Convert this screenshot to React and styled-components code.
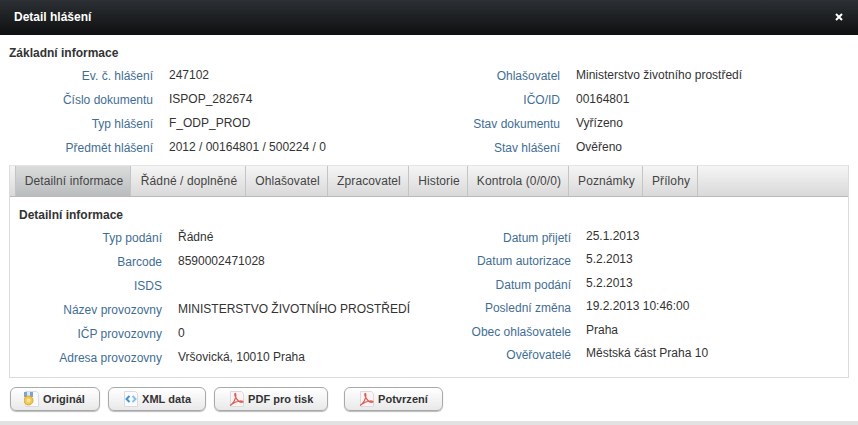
import React from "react";
import styled, { createGlobalStyle } from "styled-components";

const GlobalStyle = createGlobalStyle`
  html, body {
    margin: 0;
    padding: 0;
    background: #fff;
  }
  body {
    font-family: "Liberation Sans", Arial, sans-serif;
    font-size: 12px;
    color: #333;
  }
`;

const Dialog = styled.div`
  width: 858px;
  height: 425px;
  overflow: hidden;
  display: flex;
  flex-direction: column;
  background: #fff;
`;

const Header = styled.div`
  height: 35px;
  flex: none;
  display: flex;
  align-items: center;
  justify-content: space-between;
  padding: 0 15px 1px 14px;
  box-sizing: border-box;
  background: linear-gradient(#2c3034, #0e0f10);
  color: #fff;
  font-weight: bold;
  font-size: 12px;
`;

const Close = styled.svg`
  width: 8px;
  height: 8px;
`;

const Body = styled.div`
  flex: 1;
  padding: 11px 9px 0 9px;
  display: flex;
  flex-direction: column;
`;

const Heading = styled.div`
  font-weight: bold;
  font-size: 12px;
  line-height: 14px;
  color: #333;
`;

const Columns = styled.div`
  display: grid;
  grid-template-columns: ${(p) => p.$left}px 1fr;
  margin-top: ${(p) => p.$top}px;
`;

const Column = styled.div`
  display: flex;
  flex-direction: column;
`;

const Row = styled.div`
  display: flex;
  height: ${(p) => p.$height}px;
  line-height: 16px;
`;

const Label = styled.div`
  width: ${(p) => p.$width}px;
  flex: none;
  padding-top: 1px;
  text-align: right;
  color: #3f6e95;
`;

const Value = styled.div`
  margin-left: ${(p) => p.$gap}px;
  margin-top: ${(p) => (p.$lift ? "-1px" : "0")};
  color: #333;
  white-space: nowrap;
`;

const TabPanel = styled.div`
  margin-top: 2px;
  height: 213px;
  border: 1px solid #dcdcdc;
  border-top-color: #e4e4e4;
  box-sizing: border-box;
`;

const TabBar = styled.div`
  height: 31px;
  box-sizing: border-box;
  display: flex;
  padding-left: 5px;
  background: linear-gradient(#f5f5f5, #d9d9d9);
  border-bottom: 1px solid #b9b9b9;
`;

const Tab = styled.div`
  height: 30px;
  padding: 0 0 1px 2px;
  display: flex;
  align-items: center;
  justify-content: center;
  width: ${(p) => p.$width}px;
  box-sizing: border-box;
  border-right: 1px solid #c4c4c4;
  color: #444;
  letter-spacing: 0.1px;
  white-space: nowrap;
  background: ${(p) => (p.$active ? "linear-gradient(#dcdcdc, #b9bcbe)" : "transparent")};
  border-left: ${(p) => (p.$active ? "1px solid #c4c4c4" : "0")};
`;

const TabContent = styled.div`
  padding: 11px 9px 0;
`;

const Footer = styled.div`
  display: flex;
  margin-top: 9px;
  padding-left: 1px;
`;

const Button = styled.div`
  width: ${(p) => p.$width}px;
  height: 24px;
  margin-right: ${(p) => p.$gap}px;
  box-sizing: border-box;
  display: flex;
  align-items: center;
  padding-left: ${(p) => p.$pad}px;
  gap: 3px;
  border: 1px solid #a9a9a9;
  border-radius: 6px;
  background: linear-gradient(#ffffff, #e9e9e9);
  box-shadow: 0 1px 1px #bbb;
  font-size: 11px;
  font-weight: bold;
  letter-spacing: 0.05px;
  color: #333;
`;

const BottomStrip = styled.div`
  height: 4px;
  flex: none;
  background: #e2e2e2;
`;

const Page = ({ children, fill = "#fbfbfb" }) => (
  <svg width="16" height="16" viewBox="0 0 16 16">
    <path d="M1.5 .5h11l2 2v13h-13z" fill={fill} stroke="#d8dce2" />
    {children}
  </svg>
);

const MedalIcon = () => (
  <Page>
    <path d="M0 1h9v5H0z" fill="#7ba3cf" />
    <path d="M3 1h3v5H3z" fill="#dfe8f2" />
    <circle cx="4.500" cy="9.500" r="4.500" fill="#f2c94f" stroke="#d9a63a" />
    <circle cx="4.500" cy="9.500" r="2" fill="#f9e6a2" />
  </Page>
);

const XmlIcon = () => (
  <Page>
    <path d="M6.500 5L3.500 8l3 3" fill="none" stroke="#3f93d6" strokeWidth="2" />
    <path d="M9.500 5l3 3-3 3" fill="none" stroke="#86bfea" strokeWidth="2" />
  </Page>
);

const PdfIcon = () => (
  <Page fill="#fdf3f3">
    <path
      d="M1 14.500C3 13.500 5.500 10 6.500 7 7.200 4.500 6.800 2 6 2.500c-.8.5 0 4 3 7 1.500 1.500 4 2 5 1.500.6-.4-.5-1.200-3-1-2.500.2-6 1.500-8 3"
      fill="none"
      stroke="#d9605a"
      strokeWidth="1.200"
    />
  </Page>
);

const Info = ({ rows, labelWidth, gap, height, lift }) => (
  <Column>
    {rows.map(([label, value]) => (
      <Row key={label} $height={height}>
        <Label $width={labelWidth}>{label}</Label>
        <Value $gap={gap} $lift={lift}>{value}</Value>
      </Row>
    ))}
  </Column>
);

const tabs = [
  ["Detailní informace", 116, true],
  ["Řádné / doplněné", 115],
  ["Ohlašovatel", 82],
  ["Zpracovatel", 81],
  ["Historie", 59],
  ["Kontrola (0/0/0)", 101],
  ["Poznámky", 74],
  ["Přílohy", 55],
];

export default function App() {
  return (
    <Dialog>
      <GlobalStyle />
      <Header>
        Detail hlášení
        <Close viewBox="0 0 8 8">
          <path d="M1 1l6 6M7 1L1 7" stroke="#fff" strokeWidth="2" />
        </Close>
      </Header>
      <Body>
        <Heading>Základní informace</Heading>
        <Columns $left={415} $top={7}>
          <Info
            labelWidth={144}
            gap={16}
            height={24}
            rows={[
              ["Ev. č. hlášení", "247102"],
              ["Číslo dokumentu", "ISPOP_282674"],
              ["Typ hlášení", "F_ODP_PROD"],
              ["Předmět hlášení", "2012 / 00164801 / 500224 / 0"],
            ]}
          />
          <Info
            labelWidth={136}
            gap={16}
            height={24}
            rows={[
              ["Ohlašovatel", "Ministerstvo životního prostředí"],
              ["IČO/ID", "00164801"],
              ["Stav dokumentu", "Vyřízeno"],
              ["Stav hlášení", "Ověřeno"],
            ]}
          />
        </Columns>
        <TabPanel>
          <TabBar>
            {tabs.map(([name, width, active]) => (
              <Tab key={name} $width={width} $active={active}>
                {name}
              </Tab>
            ))}
          </TabBar>
          <TabContent>
            <Heading>Detailní informace</Heading>
            <Columns $left={420} $top={7}>
              <Info
                labelWidth={143}
                gap={16}
                height={24}
                rows={[
                  ["Typ podání", "Řádné"],
                  ["Barcode", "8590002471028"],
                  ["ISDS", ""],
                  ["Název provozovny", "MINISTERSTVO ŽIVOTNÍHO PROSTŘEDÍ"],
                  ["IČP provozovny", "0"],
                  ["Adresa provozovny", "Vršovická, 10010 Praha"],
                ]}
              />
              <Info
                labelWidth={132}
                gap={15}
                height={23.4}
                lift
                rows={[
                  ["Datum přijetí", "25.1.2013"],
                  ["Datum autorizace", "5.2.2013"],
                  ["Datum podání", "5.2.2013"],
                  ["Poslední změna", "19.2.2013 10:46:00"],
                  ["Obec ohlašovatele", "Praha"],
                  ["Ověřovatelé", "Městská část Praha 10"],
                ]}
              />
            </Columns>
          </TabContent>
        </TabPanel>
        <Footer>
          <Button $width={90} $gap={8} $pad={13}><MedalIcon />Originál</Button>
          <Button $width={98} $gap={8} $pad={14}><XmlIcon />XML data</Button>
          <Button $width={114} $gap={16} $pad={14}><PdfIcon />PDF pro tisk</Button>
          <Button $width={99} $gap={0} $pad={14}><PdfIcon />Potvrzení</Button>
        </Footer>
      </Body>
      <BottomStrip />
    </Dialog>
  );
}
